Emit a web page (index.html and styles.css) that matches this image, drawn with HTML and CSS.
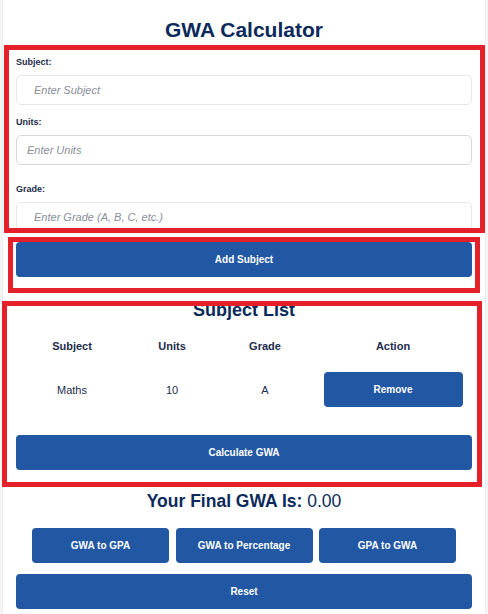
FILE: index.html
```html
<!DOCTYPE html>
<html lang="en">
<head>
<meta charset="utf-8">
<title>GWA Calculator</title>
<link rel="stylesheet" href="styles.css">
</head>
<body>
<div class="page">
  <main class="calc">
    <h1 class="title">GWA Calculator</h1>
    <div class="form">
      <label class="field-label" for="subject">Subject:</label>
      <input id="subject" class="field field-subject" type="text" placeholder="Enter Subject">
      <label class="field-label label-units" for="units">Units:</label>
      <input id="units" class="field field-units" type="text" placeholder="Enter Units">
      <label class="field-label label-grade" for="grade">Grade:</label>
      <input id="grade" class="field field-grade" type="text" placeholder="Enter Grade (A, B, C, etc.)">
    </div>
    <button class="btn btn-wide btn-add">Add Subject</button>
    <h2 class="list-title">Subject List</h2>
    <div class="table">
      <div class="th">Subject</div>
      <div class="th">Units</div>
      <div class="th">Grade</div>
      <div class="th">Action</div>
      <div class="td">Maths</div>
      <div class="td">10</div>
      <div class="td">A</div>
      <div class="td"><button class="btn btn-remove">Remove</button></div>
    </div>
    <button class="btn btn-wide btn-calc">Calculate GWA</button>
    <p class="result">Your Final GWA Is: <span class="result-value">0.00</span></p>
    <div class="convert">
      <button class="btn btn-convert">GWA to GPA</button>
      <button class="btn btn-convert">GWA to Percentage</button>
      <button class="btn btn-convert">GPA to GWA</button>
    </div>
    <button class="btn btn-wide btn-reset">Reset</button>
  </main>
  <div class="mark mark-form"></div>
  <div class="mark mark-add"></div>
  <div class="mark mark-list"></div>
</div>
</body>
</html>
```

FILE: styles.css
```css
* { box-sizing: border-box; }
html, body { margin: 0; padding: 0; }
body {
  background: #f4f5f7;
  font-family: "Liberation Sans", Arial, sans-serif;
  color: #0b2a5b;
}
.page { position: relative; width: 488px; height: 614px; overflow: hidden; }
.calc {
  margin: 0 2px;
  width: 484px;
  min-height: 614px;
  background: #fff;
  border-left: 1px solid #ececec;
  border-right: 1px solid #ececec;
  padding: 18px 13px 0;
}
.title {
  margin: 0;
  font-size: 21px;
  line-height: 24px;
  font-weight: bold;
  text-align: center;
  color: #0b2a5b;
}
.form { margin-top: 14px; }
.field-label {
  display: block;
  font-size: 9px;
  line-height: 12px;
  font-weight: bold;
  color: #1c2b4a;
  margin-bottom: 7px;
}
.label-units { margin-top: 11px; }
.label-grade { margin-top: 18px; }
.field {
  display: block;
  width: 100%;
  height: 30px;
  margin: 0;
  border: 1px solid #e6e7ea;
  border-radius: 5px;
  background: #fff;
  font-family: "Liberation Sans", Arial, sans-serif;
  font-size: 11px;
  padding: 0 10px 0 17px;
  color: #333;
}
.field-units { padding-left: 10px; border-color: #d6d8dc; }
.field::placeholder { color: #8a8f99; font-style: italic; }
.btn {
  display: block;
  height: 35px;
  border: none;
  border-radius: 4px;
  background: #2157a3;
  color: #fff;
  font-family: "Liberation Sans", Arial, sans-serif;
  font-size: 10px;
  font-weight: bold;
  padding: 0;
}
.btn-wide { width: 100%; }
.btn-add { margin-top: 10px; }
.list-title {
  margin: 22px 0 0;
  font-size: 18px;
  line-height: 22px;
  font-weight: bold;
  text-align: center;
  color: #0b2a5b;
}
.table {
  margin-top: 18px;
  display: grid;
  grid-template-columns: 112px 88px 98px 158px;
  row-gap: 19px;
  align-items: center;
}
.th {
  text-align: center;
  font-size: 11px;
  line-height: 14px;
  font-weight: bold;
  color: #1d2b4d;
}
.td {
  display: flex;
  justify-content: center;
  align-items: center;
  font-size: 11px;
  color: #1d2b4d;
}
.btn-remove { width: 139px; font-size: 10px; }
.btn-calc { margin-top: 28px; }
.result {
  margin: 21px 0 0;
  font-size: 17.5px;
  line-height: 21px;
  font-weight: bold;
  text-align: center;
  color: #0b2a5b;
}
.result-value { font-weight: normal; color: #0b2a5b; }
.convert {
  margin-top: 16px;
  display: flex;
  justify-content: center;
  gap: 6.5px;
}
.btn-convert { width: 137px; }
.btn-reset { margin-top: 11px; }
.mark {
  position: absolute;
  border: 5px solid #e4202a;
  pointer-events: none;
}
.mark-form { left: 4px; top: 45px; width: 481px; height: 188px; }
.mark-add { left: 8px; top: 237px; width: 472px; height: 56px; }
.mark-list { left: 2px; top: 301px; width: 480px; height: 186px; }
```
